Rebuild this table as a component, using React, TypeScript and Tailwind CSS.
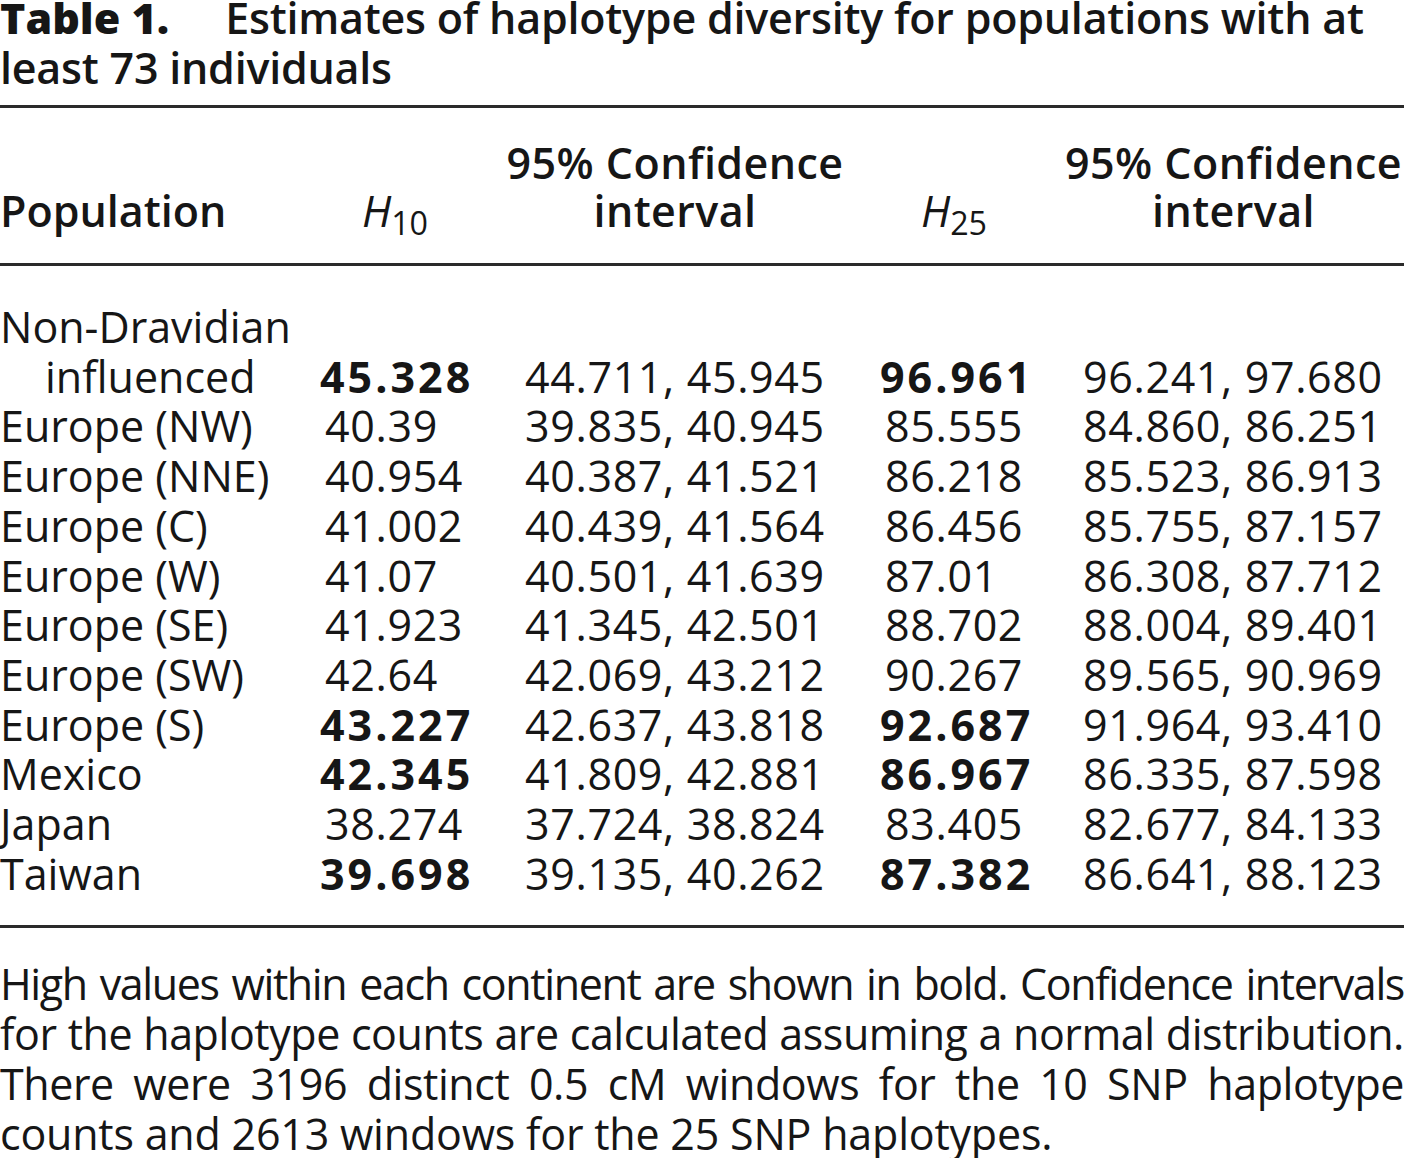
const cols = "grid grid-cols-[265px_150px_300px_148px_301px] gap-x-[55px]";

type Row = {
  name: string[];
  h10: string;
  ci10: string;
  h25: string;
  ci25: string;
  bold?: boolean;
};

const rows: Row[] = [
  { name: ["Non-Dravidian", "influenced"], h10: "45.328", ci10: "44.711, 45.945", h25: "96.961", ci25: "96.241, 97.680", bold: true },
  { name: ["Europe (NW)"], h10: "40.39", ci10: "39.835, 40.945", h25: "85.555", ci25: "84.860, 86.251" },
  { name: ["Europe (NNE)"], h10: "40.954", ci10: "40.387, 41.521", h25: "86.218", ci25: "85.523, 86.913" },
  { name: ["Europe (C)"], h10: "41.002", ci10: "40.439, 41.564", h25: "86.456", ci25: "85.755, 87.157" },
  { name: ["Europe (W)"], h10: "41.07", ci10: "40.501, 41.639", h25: "87.01", ci25: "86.308, 87.712" },
  { name: ["Europe (SE)"], h10: "41.923", ci10: "41.345, 42.501", h25: "88.702", ci25: "88.004, 89.401" },
  { name: ["Europe (SW)"], h10: "42.64", ci10: "42.069, 43.212", h25: "90.267", ci25: "89.565, 90.969" },
  { name: ["Europe (S)"], h10: "43.227", ci10: "42.637, 43.818", h25: "92.687", ci25: "91.964, 93.410", bold: true },
  { name: ["Mexico"], h10: "42.345", ci10: "41.809, 42.881", h25: "86.967", ci25: "86.335, 87.598", bold: true },
  { name: ["Japan"], h10: "38.274", ci10: "37.724, 38.824", h25: "83.405", ci25: "82.677, 84.133" },
  { name: ["Taiwan"], h10: "39.698", ci10: "39.135, 40.262", h25: "87.382", ci25: "86.641, 88.123", bold: true },
];

// H columns: bold values sit at the column edge, regular ones a few px in
function HValue({ v, bold }: { v: string; bold?: boolean }) {
  if (bold) {
    return <span className="font-bold tracking-[0.07em]">{v}</span>;
  }
  return <span className="ml-[5px] tracking-[0.015em]">{v}</span>;
}

function Rule() {
  return <div className="h-[3px] w-full bg-[#2a2a2a]" />;
}

export default function App() {
  return (
    <div className="w-[1404px] bg-white font-['Open_Sans',sans-serif] text-[43px] text-[#161616]">
      <h1 className="-mt-[7px] whitespace-nowrap leading-[50px] font-semibold tracking-[-0.005em]">
        <span className="mr-[56px] font-extrabold tracking-normal">Table 1.</span>
        Estimates of haplotype diversity for populations with at
        <br />
        least 73 individuals
      </h1>

      <div className="mt-[12px]">
        <Rule />
      </div>

      <div className={`${cols} mt-[31px] items-end whitespace-nowrap leading-[48px] font-semibold`}>
        <div>Population</div>
        <div className="flex justify-center font-normal">
          <span>
            <i>H</i>
            <sub>10</sub>
          </span>
        </div>
        <div className="flex flex-col items-center tracking-[0.01em]">
          <span>95% Confidence</span>
          <span>interval</span>
        </div>
        <div className="flex justify-center font-normal">
          <span>
            <i>H</i>
            <sub>25</sub>
          </span>
        </div>
        <div className="flex flex-col items-center tracking-[0.01em]">
          <span>95% Confidence</span>
          <span>interval</span>
        </div>
      </div>

      <div className="mt-[28px]">
        <Rule />
      </div>

      <div className="mt-[36px] whitespace-nowrap leading-[49.7px]">
        {rows.map((r) => (
          <div key={r.name.join(" ")} className={`${cols} items-end`}>
            <div className="flex flex-col">
              {r.name.map((n, i) => (
                <span key={n} className={i > 0 ? "pl-[45px]" : ""}>
                  {n}
                </span>
              ))}
            </div>
            <div>
              <HValue v={r.h10} bold={r.bold} />
            </div>
            <div className="tracking-[0.015em]">{r.ci10}</div>
            <div>
              <HValue v={r.h25} bold={r.bold} />
            </div>
            <div className="tracking-[0.015em]">{r.ci25}</div>
          </div>
        ))}
      </div>

      <div className="mt-[27px]">
        <Rule />
      </div>

      <div className="mt-[31px] whitespace-nowrap leading-[49.7px]">
        <p className="text-justify tracking-[-0.032em] [text-align-last:justify]">
          High values within each continent are shown in bold. Confidence intervals
        </p>
        <p className="text-justify tracking-[-0.01em] [text-align-last:justify]">
          for the haplotype counts are calculated assuming a normal distribution.
        </p>
        <p className="text-justify tracking-[-0.01em] [text-align-last:justify]">
          There were 3196 distinct 0.5 cM windows for the 10 SNP haplotype
        </p>
        <p className="tracking-[-0.005em]">counts and 2613 windows for the 25 SNP haplotypes.</p>
      </div>
    </div>
  );
}
